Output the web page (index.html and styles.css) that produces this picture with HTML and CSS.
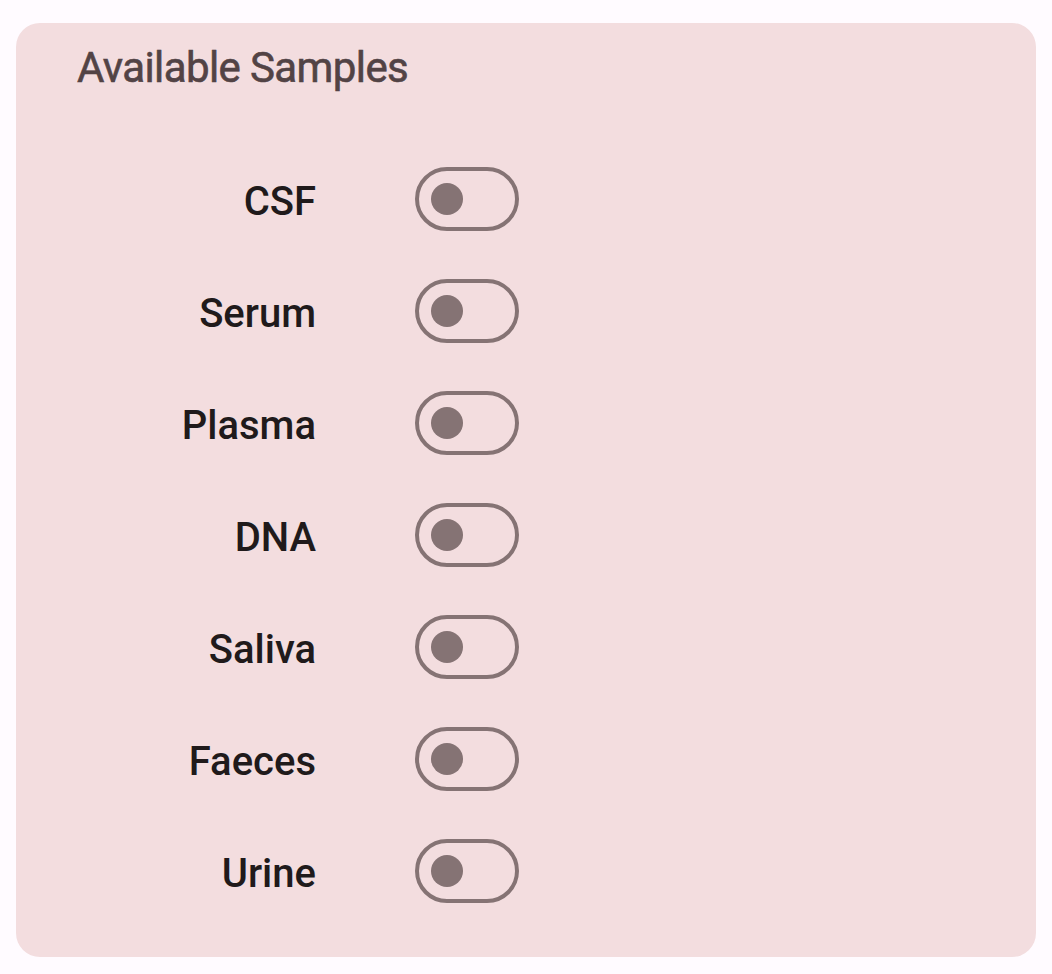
FILE: index.html
```html
<!DOCTYPE html>
<html>
<head>
<meta charset="utf-8">
<link rel="stylesheet" href="styles.css">
</head>
<body>
<div class="card">
  <h2 class="title">Available Samples</h2>
  <div class="rows">
    <div class="row"><span class="label">CSF</span><span class="switch"><span class="handle"></span></span></div>
    <div class="row"><span class="label">Serum</span><span class="switch"><span class="handle"></span></span></div>
    <div class="row"><span class="label">Plasma</span><span class="switch"><span class="handle"></span></span></div>
    <div class="row"><span class="label">DNA</span><span class="switch"><span class="handle"></span></span></div>
    <div class="row"><span class="label">Saliva</span><span class="switch"><span class="handle"></span></span></div>
    <div class="row"><span class="label">Faeces</span><span class="switch"><span class="handle"></span></span></div>
    <div class="row"><span class="label">Urine</span><span class="switch"><span class="handle"></span></span></div>
  </div>
</div>
</body>
</html>
```

FILE: styles.css
```css
html, body {
  margin: 0;
  padding: 0;
  background: #fffbff;
  font-family: Roboto, "Noto Sans", sans-serif;
}
body {
  padding: 23px 16px 17px 16px;
}
.card {
  background: #f3dddf;
  border-radius: 24px;
  height: 934px;
  box-sizing: border-box;
  padding: 19px 0 0 61px;
}
.title {
  margin: 0;
  font-size: 42px;
  font-weight: 400;
  letter-spacing: -0.6px;
  color: #524345;
  line-height: 52px;
  -webkit-text-stroke: 0.6px #524345;
}
.rows {
  display: flex;
  flex-direction: column;
  gap: 48px;
  margin-top: 73px;
}
.row {
  display: flex;
  align-items: center;
  height: 64px;
}
.label {
  width: 239px;
  text-align: right;
  font-size: 40px;
  font-weight: 500;
  color: #201a1b;
  margin-right: 99px;
  position: relative;
  top: 2px;
}
.switch {
  width: 104px;
  height: 64px;
  box-sizing: border-box;
  border: 4px solid #857374;
  border-radius: 32px;
  display: flex;
  align-items: center;
  padding-left: 12px;
}
.handle {
  width: 32px;
  height: 32px;
  border-radius: 50%;
  background: #857374;
}
```
